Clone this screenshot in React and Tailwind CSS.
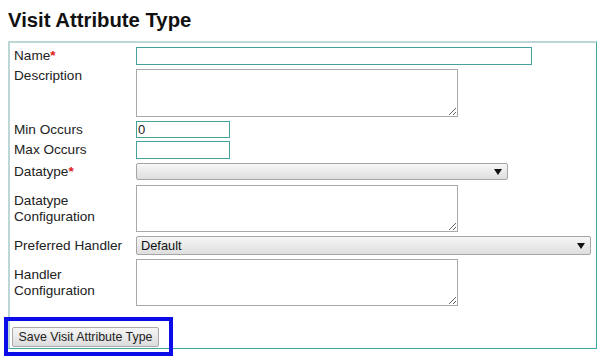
const labelCls = "w-[122px] shrink-0 text-[13.6px] leading-[15.5px] text-[#222]";

function Req() {
  return <span className="font-bold text-[#e0201a]">*</span>;
}

function Select({ width, value }) {
  return (
    <div
      className={`${width} h-full flex items-center justify-between rounded-[2px] border border-[#a6a6a6] bg-gradient-to-b from-[#f7f7f7] to-[#dedede] pl-[4px] pr-[5px] text-[12.8px] text-[#111]`}
    >
      <span>{value}</span>
      <svg width="8" height="6" viewBox="0 0 8 6">
        <path d="M0 0H8L4 6Z" fill="#111" />
      </svg>
    </div>
  );
}

function Area({ h }) {
  return (
    <textarea
      className={`w-[322px] ${h} border border-[#a9a9a9] bg-white outline-none`}
      readOnly
    />
  );
}

export default function App() {
  return (
    <div className="relative w-[600px] h-[364px] bg-white font-['Liberation_Sans',Arial,sans-serif]">
      <h1 className="pl-2 pt-[9px] text-[20.3px] font-bold leading-[23px] text-[#111]">
        Visit Attribute Type
      </h1>

      <div className="ml-2 mt-[9px] w-[589px] h-[308px] border-t-2 border-l-2 border-t-[#bcd7d5] border-l-[#bcd7d5] border-r border-b border-r-[#3ea69f] border-b-[#3ea69f] pl-1 pt-1 flex flex-col">
        <div className="flex items-center h-[18px] mb-[4px]">
          <div className={labelCls}>
            Name<Req />
          </div>
          <input
            readOnly
            className="w-[396px] h-full border border-[#45a29b] bg-white outline-none"
          />
        </div>

        <div className="flex items-start h-[48px] mb-[4px]">
          <div className={`${labelCls} -mt-[1px]`}>Description</div>
          <Area h="h-[48px]" />
        </div>

        <div className="flex items-center h-[18px] mb-[3px]">
          <div className={labelCls}>Min Occurs</div>
          <input
            readOnly
            value="0"
            className="w-[94px] h-full border border-[#45a29b] bg-white px-[1px] text-[13px] text-[#222] outline-none"
          />
        </div>

        <div className="flex items-center h-[18px] mb-[4px]">
          <div className={labelCls}>Max Occurs</div>
          <input
            readOnly
            className="w-[94px] h-full border border-[#45a29b] bg-white outline-none"
          />
        </div>

        <div className="flex items-center h-[18px] mb-[4px]">
          <div className={labelCls}>
            Datatype<Req />
          </div>
          <Select width="w-[372px]" value="" />
        </div>

        <div className="flex items-center h-[47px] mb-[4px] mt-[1px]">
          <div className={labelCls}>
            Datatype
            <br />
            Configuration
          </div>
          <Area h="h-[47px]" />
        </div>

        <div className="flex items-center h-[19px] mb-[3px]">
          <div className={labelCls}>Preferred Handler</div>
          <Select width="w-[455px]" value="Default" />
        </div>

        <div className="flex items-center h-[47px] mt-[1px]">
          <div className={labelCls}>
            Handler
            <br />
            Configuration
          </div>
          <Area h="h-[47px]" />
        </div>

        <div className="mt-[18px] ml-[-2px]">
          <button className="h-[20px] w-[147px] rounded-[2px] border border-[#a9a9a9] bg-gradient-to-b from-[#f6f6f6] to-[#dcdcdc] text-[12.4px] text-[#222]">
            Save Visit Attribute Type
          </button>
        </div>
      </div>

      <div className="absolute left-[4px] top-[317px] w-[169px] h-[39px] border-4 border-[#0c0ce8]" />
    </div>
  );
}
